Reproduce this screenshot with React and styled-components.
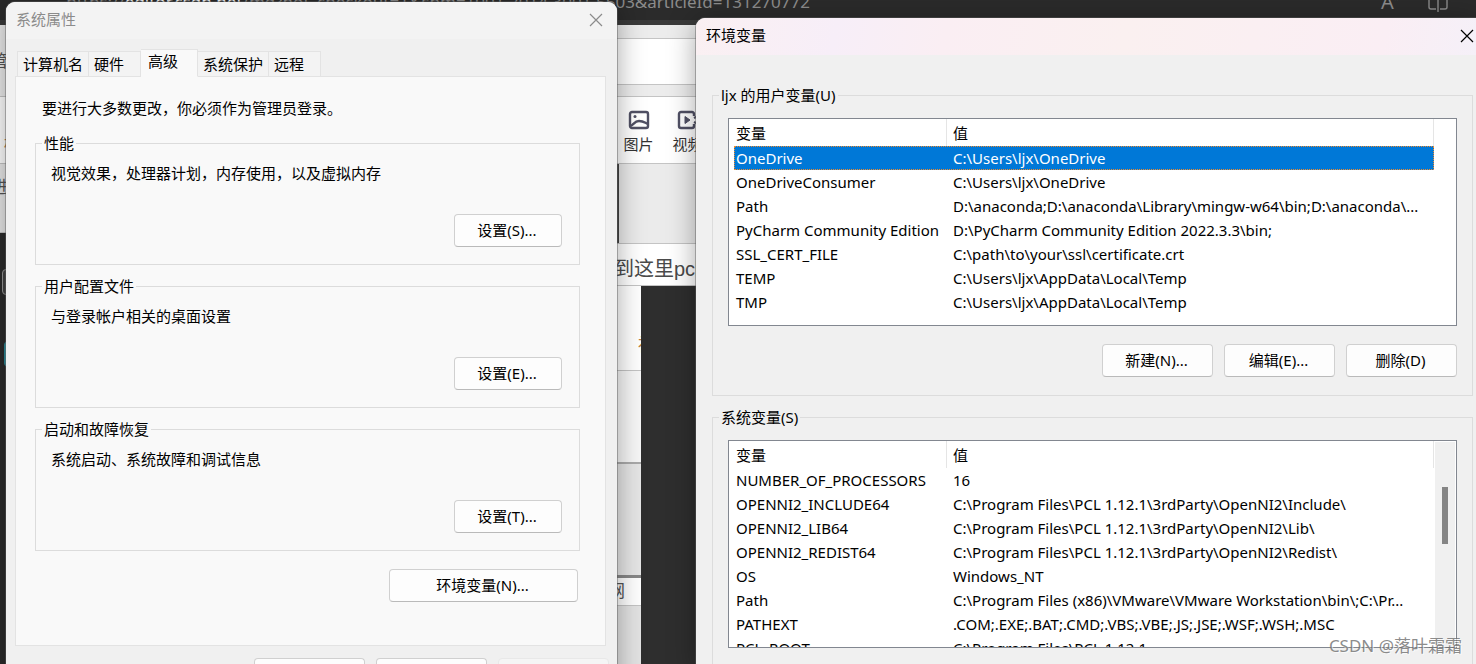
import React, { useState } from 'react'
import styled, { createGlobalStyle, css } from 'styled-components'

const GlobalStyle = createGlobalStyle`
  * {
    box-sizing: border-box;
  }

  body {
    margin: 0;
    overflow: hidden;
  }

  body, button, table {
    font-family: 'Noto Sans', 'Noto Sans CJK SC', sans-serif;
    font-size: 15px;
    line-height: 22px;
    color: #000;
  }
`

const Desktop = styled.div`
  position: relative;
  height: 100vh;
  overflow: hidden;
  background: #2e2e2e;
`

/* browser behind the dialogs */

const Browser = styled.div`
  display: flex;
  flex-direction: column;
  height: 100%;
`

const AddressBar = styled.header`
  display: flex;
  align-items: flex-end;
  height: 25px;
  flex: none;
  padding: 0 28px 6px 0;
  overflow: hidden;
  background: #2b2b2b;
  border-bottom: 5px solid #3a3a3a;
  color: #8c8c8c;
`

const Url = styled.span`
  display: flex;
  justify-content: flex-end;
  flex: 0 0 810px;
  font-size: 17px;
  line-height: 24px;
  white-space: nowrap;

  b {
    font-weight: normal;
    color: #fff;
  }
`

const BarIcons = styled.div`
  display: flex;
  align-items: flex-end;
  gap: 28px;
  margin-left: auto;
  font-size: 20px;
  line-height: 24px;

  sup {
    font-size: 12px;
    line-height: 12px;
  }
`

const BrowserBody = styled.div`
  display: grid;
  grid-template-columns: 600px 1fr;
  flex: 1;
  min-height: 0;
`

const Column = styled.div`
  display: flex;
  flex-direction: column;
  min-width: 0;
  overflow: hidden;
`

const Strip = styled.div`
  flex: none;
  height: ${props => props.h}px;
  background: ${props => props.bg || '#fff'};
  border-bottom: ${props => props.line || '1px solid #c4c4c4'};
  overflow: hidden;
`

const EdgeText = styled.div`
  display: flex;
  justify-content: flex-end;
  width: ${props => props.w}px;
  padding-top: ${props => props.top}px;
  font-size: 17px;
  color: ${props => props.color || '#555'};
  white-space: nowrap;
`

const Dark = styled.div`
  flex: 1;
  padding-top: 36px;
  background: #2b2b2b;
`

const DarkItem = styled.div`
  width: 12px;
  height: 26px;
  margin: 0 0 46px 2px;
  border: 1px solid #999;
  border-radius: 4px;
  background: #444;

  & + & {
    margin-left: 4px;
    border-color: #2b8b9a;
    background: #35a0b0;
  }
`

const Toolbar = styled(Strip)`
  display: flex;
  gap: 18px;
  padding: 12px 0 0 23px;
`

const Tool = styled.button`
  display: flex;
  flex-direction: column;
  align-items: center;
  gap: 2px;
  width: 31px;
  padding: 0;
  border: 0;
  background: none;
  color: #333;
  white-space: nowrap;
`

const Heading = styled(Strip)`
  padding: 11px 0 0 14px;
  font-family: 'Liberation Sans', 'Noto Sans CJK SC', sans-serif;
  font-size: 20px;
  line-height: 28px;
  color: #4a4a4a;
`

const EditorMark = styled.div`
  width: 19px;
  height: 100%;
  border-right: 2px solid #444;
`

const Workspace = styled.div`
  display: grid;
  grid-template-columns: 41px 1fr;
  flex: 1;
  background: #2e2e2e;
`

/* dialogs */

const Dialog = styled.section`
  position: absolute;
  background: #f0f0f0;
  border-radius: 9px 9px 0 0;
  box-shadow: 0 0 0 1px rgba(90, 90, 90, 0.45), 0 4px 28px rgba(0, 0, 0, 0.36);
`

const PropertiesDialog = styled(Dialog)`
  top: 2px;
  left: 6px;
  width: 611px;
  padding-bottom: 20px;
`

const VariablesDialog = styled(Dialog)`
  top: 18px;
  left: 696px;
  right: 0;
  border-top-right-radius: 0;
`

const TitleBar = styled.header`
  display: flex;
  align-items: center;
  justify-content: space-between;
  height: 37px;
  padding: 0 ${props => (props.active ? 2 : 14)}px 3px 10px;
  border-radius: inherit;
  background: ${props =>
    props.active
      ? 'linear-gradient(100deg, #faf0f2 0%, #f7eef8 18%, #faeef3 32%, #faf0f0 55%, #faeef4 88%, #f5f0f8 100%)'
      : '#f3f3f3'};
  color: ${props => (props.active ? '#000' : '#8b8b8b')};

  h1 {
    margin: 0;
    font-size: 15px;
    font-weight: normal;
    line-height: 22px;
  }
`

const CloseButton = styled.button`
  display: flex;
  padding: 2px 0 0;
  border: 0;
  background: none;
  color: inherit;
`

const Tabs = styled.div`
  display: flex;
  align-items: flex-end;
  height: 38px;
  padding-left: 11px;
`

const Tab = styled.button`
  height: 26px;
  min-width: 52px;
  padding: 0 5px;
  border: 1px solid #e3e3e3;
  border-left-width: ${props => (props.first ? 1 : 0)}px;
  background: #f3f3f3;
  text-align: left;
  white-space: nowrap;

  ${props =>
    props.selected &&
    css`
      height: 28px;
      min-width: 57px;
      padding: 0 7px 4px;
      border-bottom-color: #f9f9f9;
      background: #f9f9f9;
    `}
`

const TabPanel = styled.div`
  margin: -1px 11px 0 9px;
  padding: 20px 25px 43px 19px;
  border: 1px solid #e3e3e3;
  background: #f9f9f9;
`

const Notice = styled.p`
  margin: 0 0 13px 7px;
`

const Group = styled.fieldset`
  min-width: 0;
  margin: 0;
  padding: 0;
  border: 1px solid #dcdcdc;

  & + & {
    margin-top: 10px;
  }

  legend {
    margin-left: 6px;
    padding: 0 2px;
  }
`

const SettingBody = styled.div`
  display: flex;
  flex-direction: column;
  gap: 30px;
  padding: 8px 17px 17px 15px;

  p {
    margin: 0;
  }
`

const PushButton = styled.button`
  align-self: flex-end;
  width: ${props => props.w || 111}px;
  height: 33px;
  padding: 0 2px 2px 0;
  border: 1px solid #d0d0d0;
  border-bottom-color: #bababa;
  border-radius: 4px;
  background: #fdfdfd;

  &:disabled {
    border-color: #e8e8e8;
    background: #f5f5f5;
    color: #9d9d9d;
  }
`

const ButtonRow = styled.div`
  display: flex;
  justify-content: flex-end;
  gap: 11px;
  padding-top: ${props => props.top}px;
  padding-right: ${props => props.right || 0}px;
`

const VariablesBody = styled.div`
  padding: 29px 3px 0 16px;
`

const GroupContent = styled.div`
  padding: 12px 15px 18px;
`

const ListBox = styled.div`
  display: grid;
  grid-template-columns: minmax(0, 1fr) 22px;
  height: 208px;
  padding-left: 5px;
  border: 1px solid #828790;
  background: #fff;
  overflow: hidden;
`

const Table = styled.table`
  width: 100%;
  align-self: start;
  table-layout: fixed;
  border-collapse: separate;
  border-spacing: 0;

  th,
  td {
    height: 24px;
    padding: 0 0 0 2px;
    line-height: 24px;
    font-weight: normal;
    text-align: left;
    white-space: nowrap;
    overflow: hidden;
  }

  th:first-child {
    width: 213px;
  }

  th {
    height: 27px;
    border-right: 1px solid #e5e5e5;
  }

  th + th,
  td + td {
    padding-left: 6px;
  }
`

const Row = styled.tr`
  ${props =>
    props.selected &&
    css`
      background: #0078d7;
      color: #fff;
      outline: 1px dotted #f08a2c;
      outline-offset: -1px;
    `}
`

const ScrollTrack = styled.div`
  margin: 1px 1px 0;
  padding: 45px 7px 0;
  background: #f0f0f0;
`

const ScrollThumb = styled.div`
  height: 57px;
  background: #858585;
`

const Watermark = styled.div`
  position: absolute;
  right: 14px;
  bottom: 6px;
  font-size: 17px;
  line-height: 24px;
  color: rgba(110, 110, 110, 0.8);
  text-shadow: 1px 1px 0 rgba(255, 255, 255, 0.7);
`

const userVariables = [
  ['OneDrive', 'C:\\Users\\ljx\\OneDrive'],
  ['OneDriveConsumer', 'C:\\Users\\ljx\\OneDrive'],
  ['Path', 'D:\\anaconda;D:\\anaconda\\Library\\mingw-w64\\bin;D:\\anaconda\\...'],
  ['PyCharm Community Edition', 'D:\\PyCharm Community Edition 2022.3.3\\bin;'],
  ['SSL_CERT_FILE', 'C:\\path\\to\\your\\ssl\\certificate.crt'],
  ['TEMP', 'C:\\Users\\ljx\\AppData\\Local\\Temp'],
  ['TMP', 'C:\\Users\\ljx\\AppData\\Local\\Temp']
]

const systemVariables = [
  ['NUMBER_OF_PROCESSORS', '16'],
  ['OPENNI2_INCLUDE64', 'C:\\Program Files\\PCL 1.12.1\\3rdParty\\OpenNI2\\Include\\'],
  ['OPENNI2_LIB64', 'C:\\Program Files\\PCL 1.12.1\\3rdParty\\OpenNI2\\Lib\\'],
  ['OPENNI2_REDIST64', 'C:\\Program Files\\PCL 1.12.1\\3rdParty\\OpenNI2\\Redist\\'],
  ['OS', 'Windows_NT'],
  ['Path', 'C:\\Program Files (x86)\\VMware\\VMware Workstation\\bin\\;C:\\Pr...'],
  ['PATHEXT', '.COM;.EXE;.BAT;.CMD;.VBS;.VBE;.JS;.JSE;.WSF;.WSH;.MSC'],
  ['PCL_ROOT', 'C:\\Program Files\\PCL 1.12.1']
]

const settings = [
  { title: '性能', text: '视觉效果，处理器计划，内存使用，以及虚拟内存', button: '设置(S)...' },
  { title: '用户配置文件', text: '与登录帐户相关的桌面设置', button: '设置(E)...' },
  { title: '启动和故障恢复', text: '系统启动、系统故障和调试信息', button: '设置(T)...' }
]

const tabs = ['计算机名', '硬件', '高级', '系统保护', '远程']

const Close = () => (
  <CloseButton aria-label="关闭">
    <svg width="14" height="14" viewBox="0 0 14 14" stroke="currentColor" strokeWidth="1.2">
      <path d="M1 1l12 12M13 1L1 13" />
    </svg>
  </CloseButton>
)

const ImageIcon = () => (
  <svg width="22" height="22" viewBox="0 0 22 22" fill="none" stroke="#505064" strokeWidth="2.4">
    <rect x="2" y="3" width="18" height="16" rx="2" />
    <path d="M2 17c4-1 4-5 9-5s6 2 9 3" />
    <circle cx="7" cy="7.5" r="1.5" fill="#505064" stroke="none" />
  </svg>
)

const VideoIcon = () => (
  <svg width="22" height="22" viewBox="0 0 22 22" fill="none" stroke="#505064" strokeWidth="2.4">
    <path d="M17 7V5a2 2 0 0 0-2-2H4a2 2 0 0 0-2 2v12a2 2 0 0 0 2 2h11a2 2 0 0 0 2-2v-2" />
    <path d="M8 7.5v7l5-3.5z" fill="#505064" strokeWidth="1" />
    <path d="M17 9l4-2v8l-4-2" />
  </svg>
)

const VariableTable = ({ label, rows, selected, onSelect, scroll }) => (
  <ListBox>
    <Table aria-label={label}>
      <thead>
        <tr>
          <th>变量</th>
          <th>值</th>
        </tr>
      </thead>
      <tbody>
        {rows.map(([name, value]) => (
          <Row key={name} selected={selected === name} onClick={() => onSelect(name)}>
            <td>{name}</td>
            <td>{value}</td>
          </Row>
        ))}
      </tbody>
    </Table>
    {scroll && (
      <ScrollTrack>
        <ScrollThumb />
      </ScrollTrack>
    )}
  </ListBox>
)

const BrowserPage = () => (
  <Browser>
    <AddressBar>
      <Url>
        https://<b>editor.csdn.net</b>/md?not_checkout=1&amp;spm=1001.2014.3001.5503&amp;articleId=131270772
      </Url>
      <BarIcons>
        <span>
          A<sup>»</sup>
        </span>
        <svg width="20" height="24" viewBox="0 0 20 24" fill="none" stroke="#8c8c8c" strokeWidth="1.4">
          <path d="M8 5H3a2 2 0 0 0-2 2v10a2 2 0 0 0 2 2h5M12 5h5a2 2 0 0 1 2 2v10a2 2 0 0 1-2 2h-5M10 3v19" />
        </svg>
      </BarIcons>
    </AddressBar>
    <BrowserBody>
      <Column>
        <Strip h={72} bg="#ececec">
          <EdgeText w={8} top={25}>
            管
          </EdgeText>
        </Strip>
        <Strip h={67}>
          <EdgeText w={21} top={36} color="#b0703a">
            标
          </EdgeText>
        </Strip>
        <Strip h={69} bg="#e9e9e9">
          <EdgeText w={8} top={12}>
            进
          </EdgeText>
        </Strip>
        <Dark>
          <DarkItem />
          <DarkItem />
        </Dark>
      </Column>
      <Column>
        <Strip h={14} bg="#ececec" />
        <Strip h={46} />
        <Strip h={12} bg="#ececec" />
        <Toolbar h={67}>
          <Tool>
            <ImageIcon />
            图片
          </Tool>
          <Tool>
            <VideoIcon />
            视频
          </Tool>
        </Toolbar>
        <Strip h={80} bg="#ebebeb">
          <EditorMark />
        </Strip>
        <Heading h={42}>到这里pcl</Heading>
        <Workspace>
          <Column>
            <Strip h={85}>
              <EdgeText w={55} top={48} color="#c08040">
                社
              </EdgeText>
            </Strip>
            <Strip h={93} bg="#f7f7f7" line="2px solid #aaa" />
            <Strip h={114} bg="#e6e6e6" line="3px solid #888" />
            <Strip h={28}>
              <EdgeText w={25} top={2}>
                网
              </EdgeText>
            </Strip>
            <Strip h={80} bg="#e3e3e3" />
          </Column>
        </Workspace>
      </Column>
    </BrowserBody>
  </Browser>
)

const SystemProperties = () => {
  const [tab, setTab] = useState('高级')

  return (
    <PropertiesDialog>
      <TitleBar>
        <h1>系统属性</h1>
        <Close />
      </TitleBar>
      <Tabs role="tablist">
        {tabs.map((name, i) => (
          <Tab
            key={name}
            role="tab"
            aria-selected={tab === name}
            selected={tab === name}
            first={i === 0}
            onClick={() => setTab(name)}
          >
            {name}
          </Tab>
        ))}
      </Tabs>
      <TabPanel role="tabpanel">
        <Notice>要进行大多数更改，你必须作为管理员登录。</Notice>
        {settings.map(({ title, text, button }) => (
          <Group key={title}>
            <legend>{title}</legend>
            <SettingBody>
              <p>{text}</p>
              <PushButton w={108}>{button}</PushButton>
            </SettingBody>
          </Group>
        ))}
        <ButtonRow top={18} right={2}>
          <PushButton w={189}>环境变量(N)...</PushButton>
        </ButtonRow>
      </TabPanel>
      <ButtonRow top={12} right={8}>
        <PushButton>确定</PushButton>
        <PushButton>取消</PushButton>
        <PushButton disabled>应用(A)</PushButton>
      </ButtonRow>
    </PropertiesDialog>
  )
}

const EnvironmentVariables = () => {
  const [userVar, setUserVar] = useState('OneDrive')
  const [systemVar, setSystemVar] = useState(null)

  return (
    <VariablesDialog>
      <TitleBar active>
        <h1>环境变量</h1>
        <Close />
      </TitleBar>
      <VariablesBody>
        <Group>
          <legend>ljx 的用户变量(U)</legend>
          <GroupContent>
            <VariableTable label="用户变量" rows={userVariables} selected={userVar} onSelect={setUserVar} />
            <ButtonRow top={18}>
              <PushButton>新建(N)...</PushButton>
              <PushButton>编辑(E)...</PushButton>
              <PushButton>删除(D)</PushButton>
            </ButtonRow>
          </GroupContent>
        </Group>
        <Group>
          <legend>系统变量(S)</legend>
          <GroupContent>
            <VariableTable
              label="系统变量"
              rows={systemVariables}
              selected={systemVar}
              onSelect={setSystemVar}
              scroll
            />
          </GroupContent>
        </Group>
      </VariablesBody>
    </VariablesDialog>
  )
}

const App = () => (
  <Desktop>
    <GlobalStyle />
    <BrowserPage />
    <SystemProperties />
    <EnvironmentVariables />
    <Watermark>CSDN @落叶霜霜</Watermark>
  </Desktop>
)

export default App
